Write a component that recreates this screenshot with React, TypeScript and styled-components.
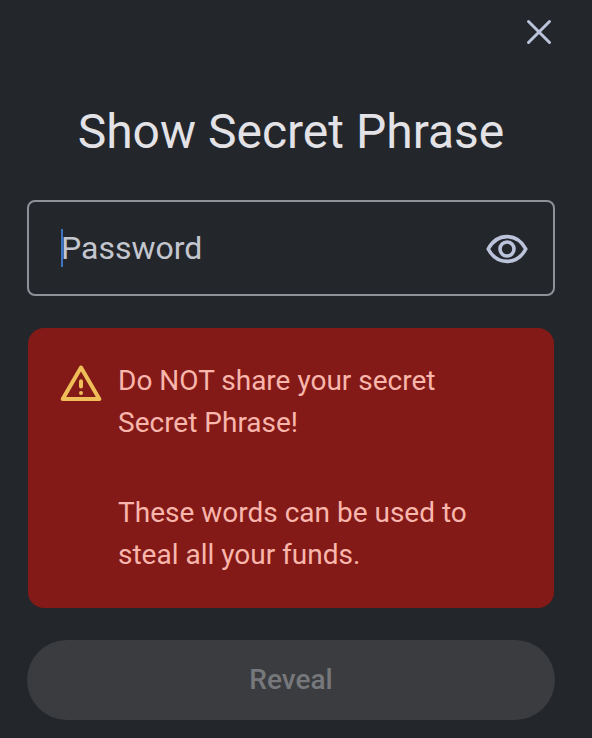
import React from 'react';
import styled, { createGlobalStyle } from 'styled-components';

const GlobalStyle = createGlobalStyle`
  * { box-sizing: border-box; }
  body { margin: 0; background: #23262b; font-family: Roboto, sans-serif; }
`;
const Page = styled.main`
  width: 592px; height: 738px; overflow: hidden; background: #23262b;
  display: flex; flex-direction: column; padding: 0 37px 0 27px;
`;
const Header = styled.header`
  height: 64px; display: flex; justify-content: flex-end; align-items: center;
`;
const IconButton = styled.button`
  border: 0; padding: 0; background: none; color: #bcc4dc; display: flex;
`;
const CloseButton = styled(IconButton)`margin-right: 1px;`;
const EyeButton = styled(IconButton)`margin-top: 2px;`;
const Title = styled.h1`
  margin: 40px 0 0; font-size: 48px; line-height: 56px; font-weight: 400;
  color: #e3e2e6; text-align: center; white-space: nowrap;
`;
const Field = styled.div`
  margin-top: 40px; width: 528px; height: 96px; border: 2px solid #8f9199; border-radius: 8px;
  display: flex; align-items: center; padding: 0 25px 0 32px;
`;
const Caret = styled.span`
  width: 2px; height: 38px; background: #3f72c0; margin-right: -2px;
`;
const Placeholder = styled.span`
  flex: 1; font-size: 32px; line-height: 40px; color: #c3c6cf;
`;
const Warning = styled.section`
  margin: 32px 0 0 1px; width: 526px; height: 280px; border-radius: 16px; background: #841a17;
  display: flex; padding: 32px; color: #f8b6ac;
`;
const WarningIcon = styled.svg`
  flex: none; margin: 4px 16px 0 0;
`;
const Copy = styled.div`
  display: flex; flex-direction: column; gap: 48px;
  font-size: 28px; line-height: 42px;
`;
const Paragraph = styled.p`margin: 0; white-space: pre-line;`;
const Reveal = styled.button`
  margin-top: 32px; width: 528px; height: 80px; flex: none; border: 0; border-radius: 40px;
  background: #3b3c3f; color: #77787c; font: 500 28px Roboto, sans-serif; padding: 0 0 2px;
`;

export default function App() {
  return (
    <>
      <GlobalStyle />
      <Page>
        <Header>
          <CloseButton aria-label="Close">
            <svg width="30" height="30" viewBox="0 0 30 30" fill="none" stroke="currentColor" strokeWidth="3" strokeLinecap="round"><path d="M4.5 4.5 25.5 25.5M25.5 4.5 4.5 25.5" /></svg>
          </CloseButton>
        </Header>
        <Title>Show Secret Phrase</Title>
        <Field>
          <Caret /><Placeholder>Password</Placeholder>
          <EyeButton aria-label="Show password">
            <svg width="42" height="42" viewBox="0 0 42 42" fill="none" stroke="currentColor" strokeLinejoin="round"><path strokeWidth="3.6" d="M2.2 21C6.5 13 12.8 8.6 21 8.6S35.5 13 39.8 21C35.5 29 29.2 33.4 21 33.4S6.5 29 2.2 21Z" /><circle cx="21" cy="21" r="7" strokeWidth="3.6" /></svg>
          </EyeButton>
        </Field>
        <Warning>
          <WarningIcon width="42" height="38" viewBox="0 0 42 38" fill="none" stroke="#efbe59" strokeWidth="4" strokeLinejoin="round" strokeLinecap="round"><path d="M2.7 35 21 3.5 39.3 35Z" /><path d="M21 17.2V22.5M21 29V29.1" /></WarningIcon>
          <Copy>
            <Paragraph>{'Do NOT share your secret\nSecret Phrase!'}</Paragraph>
            <Paragraph>{'These words can be used to\nsteal all your funds.'}</Paragraph>
          </Copy>
        </Warning>
        <Reveal disabled>Reveal</Reveal>
      </Page>
    </>
  );
}
